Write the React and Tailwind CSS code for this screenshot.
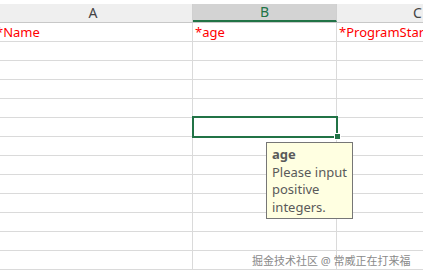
import React from 'react';

const font = { fontFamily: '"Noto Sans", "Noto Sans CJK SC", sans-serif' };

const headers = [
  { label: 'A', w: 'w-[199px]', active: false },
  { label: 'B', w: 'w-[144px]', active: true },
  { label: 'C', w: 'w-[162px]', active: false },
];

const firstRow = ['*Name', '*age', '*ProgramStart'];

function Row({ children }) {
  return <div className="flex h-[19px] border-b border-[#dadada]">{children}</div>;
}

export default function App() {
  const rows = Array.from({ length: 13 });

  return (
    <div className="relative w-[423px] h-[276px] overflow-hidden bg-white" style={font}>
      <div className="ml-[-6px] pt-[4px]">
        <div className="flex h-[19px] bg-[#efefef] border-b border-[#c8c8c8]">
          {headers.map((h) => (
            <div
              key={h.label}
              className={`${h.w} shrink-0 flex items-center justify-center text-[14px] leading-none border-r border-[#d0d0d0] ${
                h.active ? 'bg-[#d3d3d3] text-[#217346] border-b-2 border-b-[#217346]' : 'text-[#444]'
              }`}
            >
              {h.label}
            </div>
          ))}
        </div>

        {rows.map((_, i) => (
          <Row key={i}>
            {headers.map((h, c) => (
              <div
                key={h.label}
                className={`${h.w} shrink-0 border-r border-[#dadada] text-[13px] leading-[18px] text-[#ff0000] pl-[2px] whitespace-nowrap overflow-hidden`}
              >
                {i === 0 ? firstRow[c] : ''}
              </div>
            ))}
          </Row>
        ))}
      </div>

      {/* selected cell B6 */}
      <div className="absolute left-[192px] top-[116px] w-[146px] h-[22px] border-2 border-[#217346]" />
      <div className="absolute left-[335px] top-[134px] w-[5px] h-[5px] bg-[#217346] outline outline-1 outline-white" />

      {/* input message tooltip */}
      <div className="absolute left-[266px] top-[142px] w-[87px] h-[77px] bg-[#ffffe1] border border-[#767676] px-[5px] pt-[3px] text-[13px] leading-[17.5px] text-[#5a5a5a]">
        <div className="font-bold">age</div>
        <div>Please input</div>
        <div>positive</div>
        <div>integers.</div>
      </div>

      <div className="absolute left-[252px] top-[253px] text-[11px] leading-[16px] text-[#8a8a8a] whitespace-nowrap">
        掘金技术社区 @ 常威正在打来福
      </div>
    </div>
  );
}
